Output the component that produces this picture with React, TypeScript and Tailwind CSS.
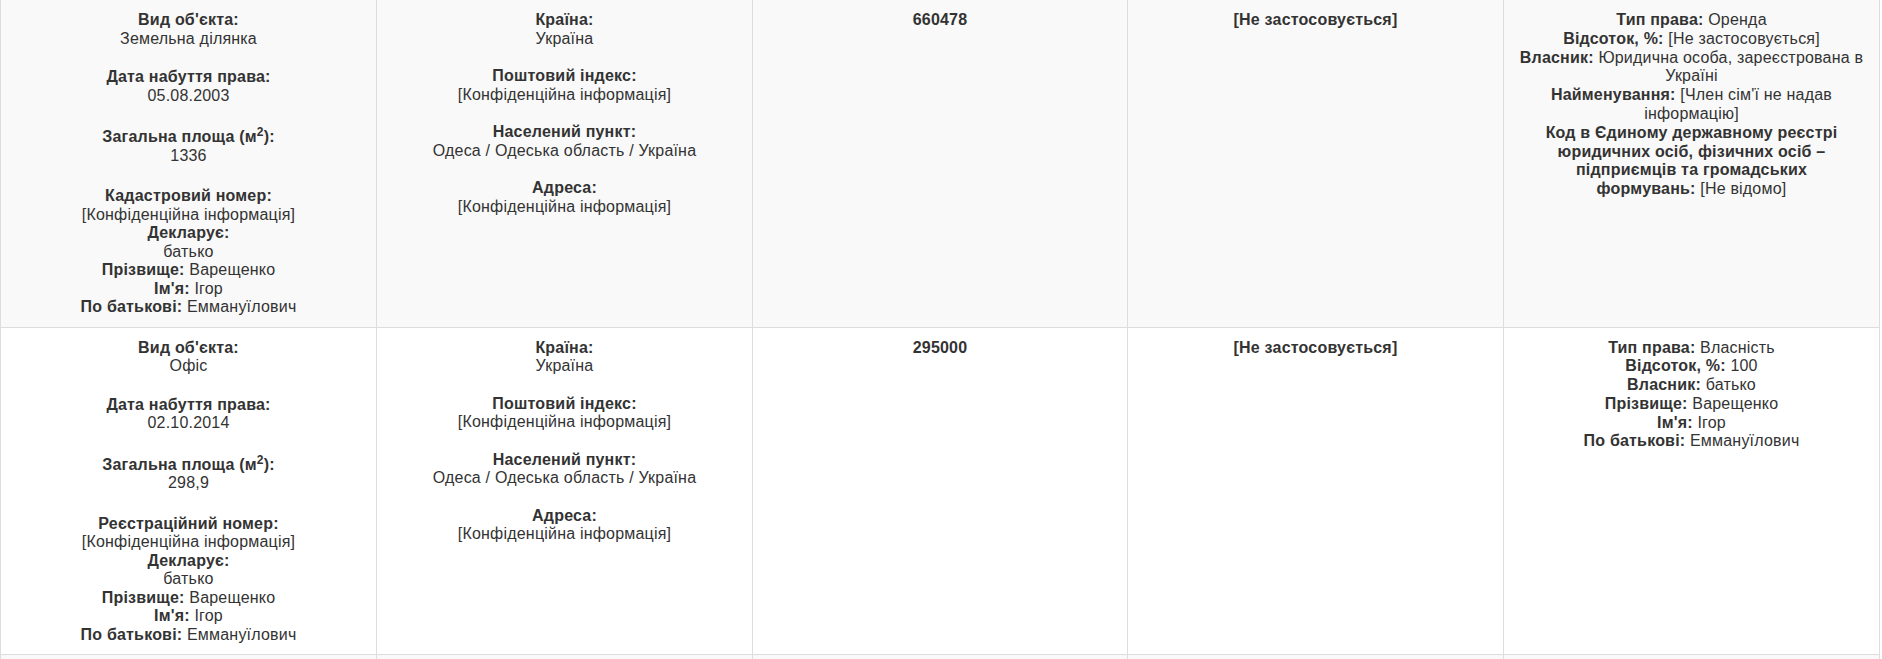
import { ReactNode } from 'react';

type Field = { label: ReactNode; value?: ReactNode; inline?: boolean };

interface Row {
  object: Field[][];
  address: Field[][];
  value: string;
  rent: string;
  rights: Field[];
}

const rows: Row[] = [
  {
    object: [
      [{ label: "Вид об'єкта:", value: 'Земельна ділянка' }],
      [{ label: 'Дата набуття права:', value: '05.08.2003' }],
      [{ label: <>Загальна площа (м<sup>2</sup>):</>, value: '1336' }],
      [
        { label: 'Кадастровий номер:', value: '[Конфіденційна інформація]' },
        { label: 'Декларує:', value: 'батько' },
        { label: 'Прізвище:', value: 'Варещенко', inline: true },
        { label: "Ім'я:", value: 'Ігор', inline: true },
        { label: 'По батькові:', value: 'Еммануїлович', inline: true },
      ],
    ],
    address: [
      [{ label: 'Країна:', value: 'Україна' }],
      [{ label: 'Поштовий індекс:', value: '[Конфіденційна інформація]' }],
      [{ label: 'Населений пункт:', value: 'Одеса / Одеська область / Україна' }],
      [{ label: 'Адреса:', value: '[Конфіденційна інформація]' }],
    ],
    value: '660478',
    rent: '[Не застосовується]',
    rights: [
      { label: 'Тип права:', value: 'Оренда', inline: true },
      { label: 'Відсоток, %:', value: '[Не застосовується]', inline: true },
      { label: 'Власник:', value: 'Юридична особа, зареєстрована в Україні', inline: true },
      { label: 'Найменування:', value: "[Член сім'ї не надав інформацію]", inline: true },
      {
        label: (
          <>
            Код в Єдиному державному реєстрі юридичних осіб, фізичних осіб – підприємців та громадських
            <br />
            формувань:
          </>
        ),
        value: '[Не відомо]',
        inline: true,
      },
    ],
  },
  {
    object: [
      [{ label: "Вид об'єкта:", value: 'Офіс' }],
      [{ label: 'Дата набуття права:', value: '02.10.2014' }],
      [{ label: <>Загальна площа (м<sup>2</sup>):</>, value: '298,9' }],
      [
        { label: 'Реєстраційний номер:', value: '[Конфіденційна інформація]' },
        { label: 'Декларує:', value: 'батько' },
        { label: 'Прізвище:', value: 'Варещенко', inline: true },
        { label: "Ім'я:", value: 'Ігор', inline: true },
        { label: 'По батькові:', value: 'Еммануїлович', inline: true },
      ],
    ],
    address: [
      [{ label: 'Країна:', value: 'Україна' }],
      [{ label: 'Поштовий індекс:', value: '[Конфіденційна інформація]' }],
      [{ label: 'Населений пункт:', value: 'Одеса / Одеська область / Україна' }],
      [{ label: 'Адреса:', value: '[Конфіденційна інформація]' }],
    ],
    value: '295000',
    rent: '[Не застосовується]',
    rights: [
      { label: 'Тип права:', value: 'Власність', inline: true },
      { label: 'Відсоток, %:', value: '100', inline: true },
      { label: 'Власник:', value: 'батько', inline: true },
      { label: 'Прізвище:', value: 'Варещенко', inline: true },
      { label: "Ім'я:", value: 'Ігор', inline: true },
      { label: 'По батькові:', value: 'Еммануїлович', inline: true },
    ],
  },
];

function Line({ field }: { field: Field }) {
  if (field.inline) {
    return (
      <div>
        <b className="font-bold">{field.label}</b> {field.value}
      </div>
    );
  }
  return (
    <>
      <div className="font-bold">{field.label}</div>
      <div>{field.value}</div>
    </>
  );
}

// gaps between the blocks of the first column differ a little (the m² line)
const objectGaps = ['', 'mt-[20px]', 'mt-[23px]', 'mt-[22px]'];

const cell = 'border-l border-b border-[#ddd] px-2 pt-[11px] pb-[10px] text-center';

export default function App() {
  return (
    <div
      className="w-[1882px] h-[659px] overflow-hidden bg-white text-[16px] leading-[18.5px] tracking-[0.2px] text-[#333]"
      style={{ fontFamily: '"Liberation Sans", Arial, sans-serif' }}
    >
      <div className="w-[1880px]">
        {rows.map((row, i) => (
          <div
            key={row.value}
            className={`grid grid-cols-[376px_376px_375px_376px_377px] ${i % 2 === 0 ? 'bg-[#f9f9f9]' : 'bg-white'}`}
          >
            <div className={cell}>
              {row.object.map((group, g) => (
                <div key={g} className={objectGaps[g]}>
                  {group.map((f, k) => (
                    <Line key={k} field={f} />
                  ))}
                </div>
              ))}
            </div>
            <div className={cell}>
              {row.address.map((group, g) => (
                <div key={g} className={g > 0 ? 'mt-[19px]' : ''}>
                  {group.map((f, k) => (
                    <Line key={k} field={f} />
                  ))}
                </div>
              ))}
            </div>
            <div className={`${cell} font-bold`}>{row.value}</div>
            <div className={`${cell} font-bold`}>{row.rent}</div>
            <div className={`${cell} border-r leading-[18.8px]`}>
              {row.rights.map((f, k) => (
                <Line key={k} field={f} />
              ))}
            </div>
          </div>
        ))}
        {/* next striped row, cut by the bottom of the window */}
        <div className="grid grid-cols-[376px_376px_375px_376px_377px] h-[20px] bg-[#f9f9f9]">
          <div className="border-l border-[#ddd]" />
          <div className="border-l border-[#ddd]" />
          <div className="border-l border-[#ddd]" />
          <div className="border-l border-[#ddd]" />
          <div className="border-l border-r border-[#ddd]" />
        </div>
      </div>
    </div>
  );
}
